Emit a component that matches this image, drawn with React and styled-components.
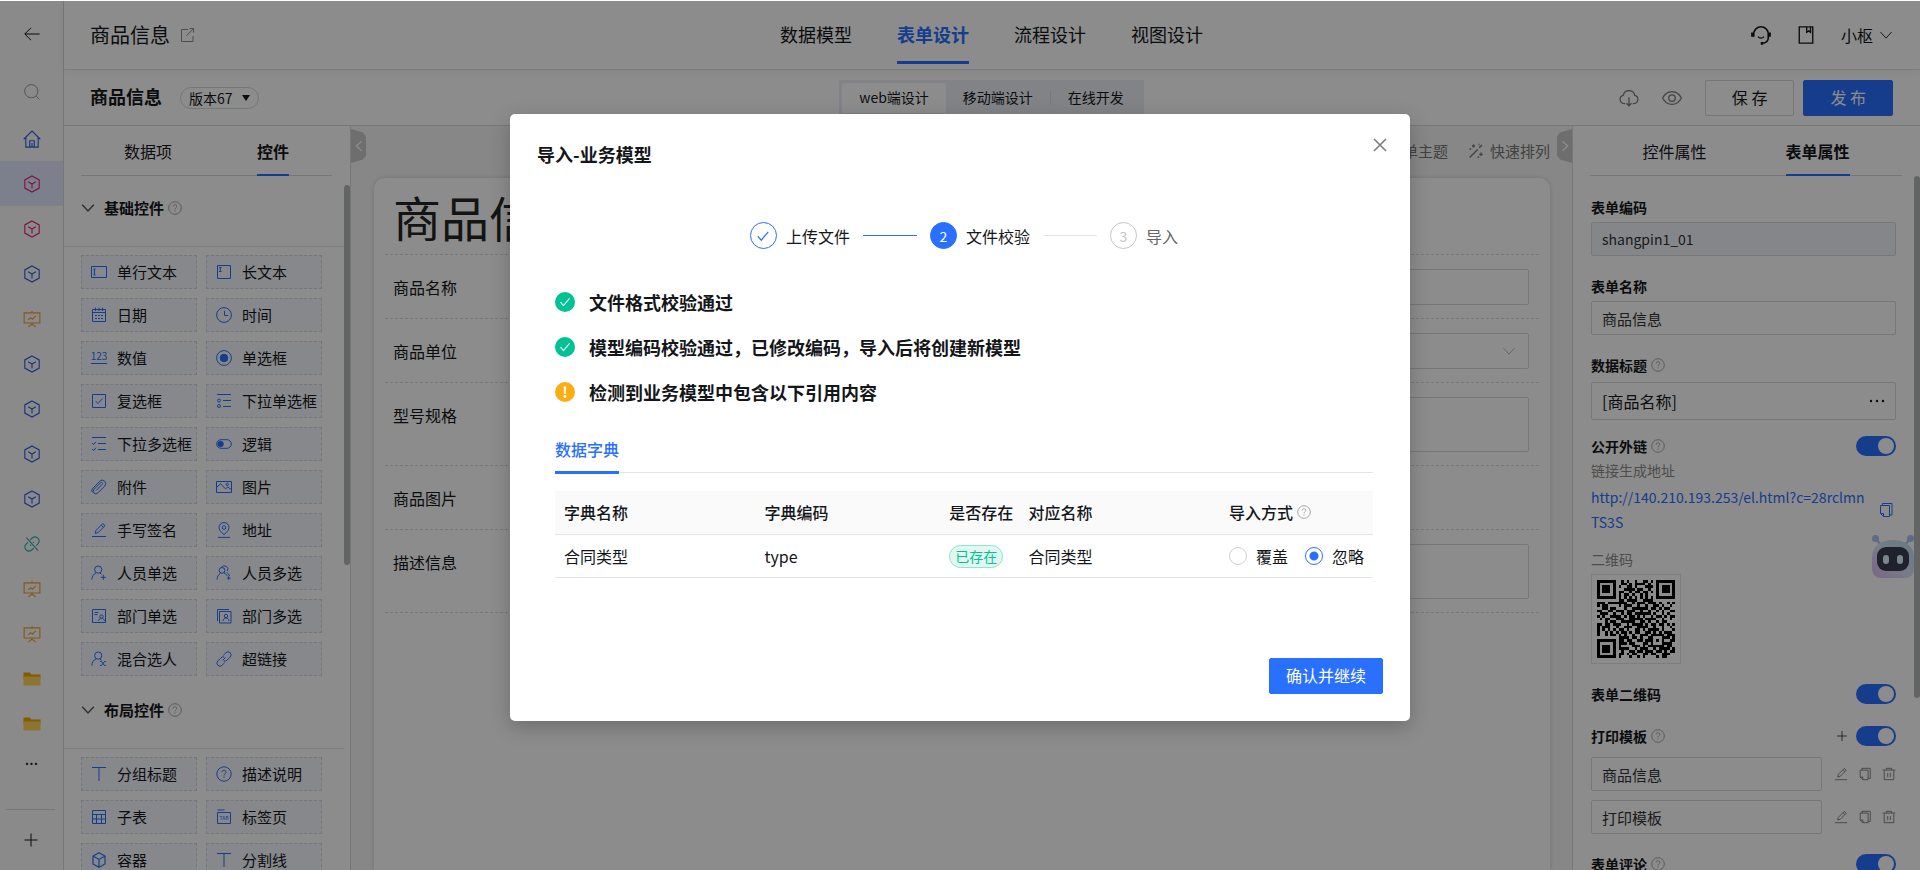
import React from 'react';
import styled, { createGlobalStyle, ThemeProvider } from 'styled-components';

const theme = {
  colorMain: '#2970ff',
  colorText: '#14161a',
  colorMuted: '#8c8c8c',
  colorBorder: '#d9d9d9',
  colorLine: '#e5e5e5',
  colorWhite: '#ffffff',
  colorSuccess: '#00c292',
  colorWarning: '#faad14',
};

const GlobalStyle = createGlobalStyle`
  * {
    box-sizing: border-box;
  }
  body {
    margin: 0;
    background: #ffffff;
    color: #14161a;
    font-family: 'Noto Sans CJK SC', 'Noto Sans', sans-serif;
    font-size: 16px;
    line-height: 24px;
  }
  button, input, select, textarea {
    font: inherit;
    color: inherit;
    margin: 0;
  }
  button {
    padding: 0;
    border: 0;
    background: none;
    cursor: pointer;
  }
  a {
    color: inherit;
    text-decoration: none;
  }
  h1, h2, h3, p {
    margin: 0;
  }
`;

/* icons */

const Svg = styled.svg`
  display: block;
  flex: none;
  width: ${({ $size }) => $size || 16}px;
  height: ${({ $size }) => $size || 16}px;
  overflow: visible;
  fill: none;
  stroke: currentColor;
  stroke-width: 1;
`;

const personShape = (
  <>
    <circle cx="7.2" cy="4.6" r="3.6" />
    <path d="M.8 14.6c.2-3.4 1.8-5.8 4.4-6.6M9 8.2l1.6 1" />
  </>
);

const icons = {
  back: <path d="M15.6 8H.8M7 1.8.8 8 7 14.2" />,
  search: (
    <>
      <circle cx="7.3" cy="7.2" r="6.6" />
      <path d="m12 12 3.4 3.4" />
    </>
  ),
  home: <path d="M.6 8.2 8 .9l7.4 7.3M2.5 6.6v8.6h11V6.6M6 15V9.6h4V15M8 11.5V15" />,
  cube: (
    <>
      <path d="M8 .8 14.4 4.4v7.2L8 15.2 1.6 11.6V4.4z" />
      <path d="M4.6 6 8 8l3.4-2M8 8v4" />
    </>
  ),
  board: (
    <>
      <path d="M1 2.5h14v9H1zM8 .8v1.5M8 11.6v1.2M4.6 15 8 12.6 11.4 15" />
      <path d="m4.6 8.8 2.2-2 1.6 1.4 3-3" />
    </>
  ),
  unlink: (
    <>
      <path d="M6.4 4.2 8.6 2.4a3.6 3.6 0 0 1 5 5L11.8 9.4M4.4 6.6 2.4 8.6a3.6 3.6 0 0 0 5 5L9.6 11.8" />
      <path d="m3 2.4 10.4 11.4M6.2 9.6l1-1M9 7l.8-.8" />
    </>
  ),
  share: <path d="M9 2.5H2.5v12h11.5V9M7.4 8.8 14.2 2M10.6 1.5h4v4" />,
  headset: (
    <>
      <path strokeWidth="1.3" d="M2.2 9.4V7.2a5.8 5.8 0 0 1 11.6 0v3.2c0 2-1.6 3.8-4.4 4.2" />
      <path strokeWidth="2.2" d="M1.2 6v3.4M14.8 6v3.4M7.8 14.6h2" />
      <path d="M5.6 9.2c1.2 1.6 3.6 1.6 4.8 0" />
    </>
  ),
  book: <path strokeWidth="1.2" d="M2 .8h12v14.4H2zM8.6 1v4.6l1.8-1.2 1.6 1.2V1" />,
  down: <path d="m1.6 4.6 6.4 7 6.4-7" />,
  downBold: <path strokeWidth="1.6" d="m1.4 4.4 6.6 7 6.6-7" />,
  left: <path strokeWidth="1.6" d="M11 2.6 5 8l6 5.4" />,
  right: <path strokeWidth="1.6" d="m5 2.6 6 5.4-6 5.4" />,
  cloud: (
    <>
      <path d="M5 12.4H4a3.3 3.3 0 0 1-.6-6.5 4.7 4.7 0 0 1 9.2 0 3.3 3.3 0 0 1-.6 6.5h-1" />
      <path d="M8 7.4v6.8m-2-2 2 2 2-2" />
    </>
  ),
  eye: (
    <>
      <path d="M.5 8C2.3 4.5 4.9 2.9 8 2.9s5.7 1.6 7.5 5.1c-1.8 3.5-4.4 5.1-7.5 5.1S2.3 11.5.5 8z" />
      <circle cx="8" cy="8" r="2.6" />
    </>
  ),
  wand: (
    <>
      <path strokeWidth="1.4" d="m1.6 14.4 8-8M11.2 4.8l2.8-2.8" />
      <path strokeWidth="1.3" d="M5.500 1.500v3M4 3h3M13 9.500v3.600M11.200 11.300h3.600M1.600 6h1.600M9.600 14h1.600M10.500 1.500h1" />
    </>
  ),
  help: (
    <>
      <circle cx="8" cy="8" r="7.2" />
      <path d="M5.9 6.3c0-1.3.9-2 2.1-2s2.1.8 2.1 1.9c0 1.5-2.1 1.6-2.1 3.3M8 10.7V12" />
    </>
  ),
  input: (
    <>
      <path d="M.5 2.5h15v11H.5z" />
      <path d="M2.5 5h2M2.5 11h2M3.5 5v6" />
    </>
  ),
  textarea: (
    <>
      <path d="M1.5 1.5h13v13h-13z" />
      <path d="M3 3.5h2.5M4.3 3.5v4M3 7.5h2.5" />
    </>
  ),
  date: (
    <path d="M1.5 2.5h13v12h-13zM1.5 5.5h13M4.5.6v3.4M8 .6v3.4M11.5.6v3.4M4 8.5h2M7 8.5h2M10 8.5h2M4 11.5h2M7 11.5h2M10 11.5h2" />
  ),
  time: (
    <>
      <circle cx="8" cy="8" r="7.4" />
      <path d="M8.5 3.8v4.7h3.7" />
    </>
  ),
  number: (
    <>
      <text x="8" y="10" fontSize="10" textAnchor="middle" fill="currentColor" stroke="none">
        123
      </text>
      <path d="M0 13.5h16" />
    </>
  ),
  radio: (
    <>
      <circle cx="8" cy="8" r="7.4" />
      <circle cx="8" cy="8" r="3.8" fill="currentColor" />
    </>
  ),
  checkbox: (
    <>
      <path d="M1.5 1.5h13v13h-13z" />
      <path d="m4.5 8 2.5 2.5 4.6-5" />
    </>
  ),
  selectOne: (
    <>
      <path d="M1 1.5h14M7 7.5h8M7 13.5h8" />
      <circle cx="3" cy="7.5" r="1.5" />
      <circle cx="3" cy="13" r="1.5" />
    </>
  ),
  selectMany: (
    <path d="M1 1.5h14M7 7.5h8M7 13.5h8M1.2 7l1.4 1.5L5 5.8M1.2 13l1.4 1.5L5 11.8" />
  ),
  toggle: (
    <>
      <rect x=".7" y="3.7" width="14.6" height="8.6" rx="4.3" />
      <circle cx="4.6" cy="8" r="2.7" fill="currentColor" />
    </>
  ),
  clip: (
    <path d="m5 11.6 6.2-6.3a1.1 1.1 0 0 0-1.6-1.6L3 10.4a2.6 2.6 0 0 0 3.7 3.7l7-7a3.4 3.4 0 0 0-4.9-4.9L2 9.2a3 3 0 0 0-.6 4.2" />
  ),
  image: (
    <>
      <path d="M.5 2.5h15v11H.5z" />
      <path d="m.8 8.2 3.800-3.400 4.800 5 2.400-1.800 3.400 2.400" />
      <circle cx="11.3" cy="5.4" r="1.2" />
    </>
  ),
  edit: <path d="M1 14.5h14M4.2 11.4l.8-3L11.8 1.5l2.2 2.2-6.800 6.900zM10.3 3.1l2.2 2.2" />,
  place: (
    <>
      <path d="M8 12.6C4.6 9.7 3 7.8 3 5.5a5 5 0 0 1 10 0c0 2.300-1.600 4.200-5 7.100zM2 15.4h12" />
      <circle cx="8" cy="5.6" r="1.8" />
    </>
  ),
  person: (
    <>
      {personShape}
      <path d="M12.3 9.8v5M9.8 12.3h5" />
    </>
  ),
  people: (
    <>
      <circle cx="6" cy="5.4" r="2.9" />
      <path d="M1 14.6c.2-2.8 1.3-5 3.3-6.2M5.5 2.4A3.3 3.3 0 1 1 11.3 6M8 8.2c1.8.5 3 1.8 3.4 3M10.5 7.6c1.8.8 2.600 1.800 3 3.400M12.7 11.3v3.6M10.9 13.1h3.6" />
    </>
  ),
  mixed: (
    <>
      {personShape}
      <path d="M9 10.5h1.5l3 4H15M9 14.5h1.5l3-4H15" />
    </>
  ),
  dept: (
    <>
      <path d="M1.5 1.5h13v13h-13zM3.5 4.5h4M3.5 6.5h3" />
      <circle cx="10.5" cy="8.6" r="1.7" />
      <path d="M7.6 13c.2-1.7 1.2-2.7 2.9-2.7s2.7 1 2.9 2.7" />
    </>
  ),
  depts: (
    <>
      <path d="M3.5 3.5H15V15H3.5zM1.5 13V1.5H13" />
      <circle cx="10" cy="8" r="1.7" />
      <path d="M7 13c.2-2 1.3-3 3-3s2.8 1 3 3" />
    </>
  ),
  link: (
    <path d="m7.2 4.4 2.6-2.6a2.9 2.9 0 0 1 4.4 4.2L11 9.2a2.9 2.9 0 0 1-3.3.7M8.8 11.6l-2.6 2.6a2.9 2.9 0 0 1-4.4-4.2L5 6.8a2.9 2.9 0 0 1 3.3-.7M6.6 9.4l2.8-2.8" />
  ),
  title: <path d="M1 1.5h14M8 1.5V15" />,
  table: <path d="M1.5 1.5h13v13h-13zM1.5 5.5h13M1.5 10h13M5.5 5.5v9M10.5 5.5v9" />,
  tab: (
    <>
      <path d="M1.5 3.5h13v11h-13zM1.5 1h7" />
      <text x="8" y="11" fontSize="5" textAnchor="middle" fill="currentColor" stroke="none">
        TAB
      </text>
    </>
  ),
  box: <path strokeWidth="1.2" d="M8 .8 14 4v8l-6 3.2L2 12V4zM2 4l6 3.4L14 4M8 7.4v7.8" />,
  plus: <path d="M8 1.5v13M1.5 8h13" />,
  dots: (
    <g fill="currentColor" stroke="none">
      <circle cx="2" cy="8" r="1.2" />
      <circle cx="8" cy="8" r="1.2" />
      <circle cx="14" cy="8" r="1.2" />
    </g>
  ),
  close: <path strokeWidth="1.7" d="m2 2 12 12M14 2 2 14" />,
  check: <path strokeWidth="1.4" d="m2 8.2 4 4.6 8-9.6" />,
  copy: <path d="M2.5 3.5h9v11h-6l-3-3zM5.5 14.5v-3h-3M4.5 3.500v-2H14V13h-2.500" />,
  trash: <path d="M2.5 4v10.5h11V4M.8 3.5h14.4M5 3.5v-2h6v2M6.5 7v4.5M9.5 7v4.5" />,
};

const Icon = ({ name, size }) => (
  <Svg viewBox="0 0 16 16" $size={size} aria-hidden="true">
    {icons[name]}
  </Svg>
);

const FolderIcon = () => (
  <Svg viewBox="0 0 18 16" $size={18} aria-hidden="true">
    <path d="M.5 1.5h6l2 2h9v5H.5z" fill="#f0a800" stroke="none" />
    <path d="M.5 5.500h17v9H.5z" fill="#ffd45a" stroke="none" />
  </Svg>
);

const qrRows = [
  '11111110010100100110101111111',
  '10000010011010111101001000001',
  '10111010100110100011101011101',
  '10111010001111011001001011101',
  '10111010110010110110101011101',
  '10000010101101001010001000001',
  '11111110101010101010101111111',
  '00000000110111100111100000000',
  '11101111111001011101110100101',
  '10110000101110010010011010010',
  '00110110001001111110110101100',
  '11001101110111001001001010011',
  '01110010010110111111010010100',
  '10100111101011010100101101011',
  '01011001110011111011110010010',
  '00010110011111001101001011000',
  '11011011100101111010110110101',
  '10111001001110011110010010010',
  '10101010110100110101111010001',
  '10010101011010110011010101110',
  '10010110101001001110111110111',
  '00000000111101101001100011101',
  '11111110110110011011101010011',
  '10000010111011000110100011110',
  '10111010100001110101111110110',
  '10111010111100101110010111101',
  '10111010010011011011101101011',
  '10000010110101100110110011100',
  '11111110100010010100001011000',
];

const QrImage = styled.svg`
  display: block;
  width: 78px;
  height: 78px;
  shape-rendering: crispEdges;
`;

const QrCode = () => (
  <QrImage viewBox="0 0 29 29" aria-hidden="true">
    {qrRows.map((row, y) =>
      row.split('').map((bit, x) => (bit === '1' ? <rect key={`${x}-${y}`} x={x} y={y} width="1" height="1" /> : null))
    )}
  </QrImage>
);

/* shell */

const StyledApp = styled.div`
  position: relative;
  display: flex;
  height: 100vh;
  padding-top: 1px;
  overflow: hidden;
`;

const StyledRail = styled.nav`
  display: flex;
  flex-direction: column;
  flex: none;
  width: 64px;
  background: #fbfbfb;
  border-right: 1px solid ${({ theme }) => theme.colorBorder};
`;

const StyledRailButton = styled.button`
  display: flex;
  align-items: center;
  justify-content: center;
  flex: none;
  height: ${({ $height }) => $height || 45}px;
  color: ${({ $color }) => $color || '#14161a'};
  background: ${({ $active }) => ($active ? '#e0eaff' : 'transparent')};
`;

const StyledRailFooter = styled.div`
  display: flex;
  flex-direction: column;
  margin: auto 8px 0 6px;
  border-top: 1px solid ${({ theme }) => theme.colorBorder};
`;

const StyledMain = styled.div`
  display: flex;
  flex-direction: column;
  flex: 1;
  min-width: 0;
`;

const StyledHeader = styled.header`
  position: relative;
  z-index: 1;
  display: grid;
  grid-template-columns: 1fr auto 1fr;
  align-items: center;
  flex: none;
  height: 69px;
  padding: 0 27px 0 26px;
  border-bottom: 1px solid ${({ theme }) => theme.colorLine};
  box-shadow: 0 2px 6px rgba(0, 0, 0, 0.06);
`;

const StyledSubHeader = styled(StyledHeader)`
  z-index: 0;
  height: 56px;
  border-color: ${({ theme }) => theme.colorBorder};
  box-shadow: none;
`;

const StyledGroup = styled.div`
  display: flex;
  align-items: center;
  justify-content: ${({ $end }) => ($end ? 'flex-end' : 'flex-start')};
  gap: ${({ $gap }) => $gap}px;
`;

const StyledAppName = styled.h1`
  font-size: 20px;
  font-weight: 400;
`;

const StyledFormName = styled.h2`
  padding-bottom: 3px;
  font-size: 18px;
  font-weight: 700;
`;

const StyledIconButton = styled.button`
  display: flex;
  align-items: center;
  gap: 6px;
  color: ${({ $color }) => $color || '#14161a'};
`;

const StyledTopNav = styled.nav`
  display: flex;
  align-self: stretch;
  gap: 45px;
`;

const StyledTopLink = styled.a`
  display: flex;
  align-items: center;
  height: 63px;
  padding-top: 5px;
  font-size: 18px;
  font-weight: ${({ $active }) => ($active ? 700 : 400)};
  color: ${({ $active, theme }) => ($active ? theme.colorMain : theme.colorText)};
  border-bottom: 3px solid ${({ $active, theme }) => ($active ? theme.colorMain : 'transparent')};
`;

const StyledVersion = styled.button`
  display: flex;
  align-items: center;
  gap: 9px;
  height: 22px;
  padding: 0 8px;
  font-size: 14px;
  line-height: 18px;
  border: 1px solid ${({ theme }) => theme.colorBorder};
  border-radius: 11px;

  &::after {
    content: '';
    border: 4px solid transparent;
    border-top: 6px solid #14161a;
    border-bottom: 0;
  }
`;

const StyledSegments = styled.div`
  display: flex;
  align-items: center;
  height: 36px;
  padding: 3px;
  background: #eceff5;
  border-radius: 2px;
`;

const StyledSegment = styled.button`
  height: 30px;
  padding: 0 17px 2px;
  font-size: 14px;
  border-radius: 2px;
  background: ${({ $active }) => ($active ? '#ffffff' : 'transparent')};
`;

const StyledSegmentLine = styled.span`
  width: 1px;
  height: 14px;
  background: ${({ theme }) => theme.colorBorder};
`;

const StyledButton = styled.button`
  height: 36px;
  padding: 0 ${({ $padding }) => $padding || 26}px 2px;
  border: 1px solid ${({ $primary, theme }) => ($primary ? theme.colorMain : theme.colorBorder)};
  border-radius: 2px;
  background: ${({ $primary, theme }) => ($primary ? theme.colorMain : theme.colorWhite)};
  color: ${({ $primary, theme }) => ($primary ? theme.colorWhite : theme.colorText)};
`;

const StyledWorkspace = styled.div`
  display: flex;
  flex: 1;
  min-height: 0;
`;

const StyledSide = styled.aside`
  display: flex;
  flex-direction: column;
  flex: none;
  width: ${({ $width }) => $width}px;
  border: 0 solid ${({ theme }) => theme.colorBorder};
  border-${({ $edge }) => $edge}-width: 1px;
`;

const StyledTabs = styled.div`
  display: flex;
  justify-content: center;
  flex: none;
  gap: ${({ $gap }) => $gap}px;
  height: 50px;
  margin: 0 18px 0 17px;
  border-bottom: 1px solid ${({ theme }) => theme.colorBorder};
`;

const StyledTab = styled.button`
  height: 50px;
  padding-top: 2px;
  font-weight: ${({ $active }) => ($active ? 700 : 400)};
  border-bottom: 2px solid ${({ $active, theme }) => ($active ? theme.colorMain : 'transparent')};
`;

const StyledScrollArea = styled.div`
  display: flex;
  justify-content: space-between;
  flex: 1;
  min-height: 0;
  overflow: hidden;
`;

const StyledScrollThumb = styled.span`
  flex: none;
  width: 6px;
  height: ${({ $height }) => $height}px;
  margin-top: ${({ $top }) => $top || 0}px;
  background: #b4b9b8;
  border-radius: 3px;
`;

/* control palette */

const StyledPalette = styled.div`
  flex: 1;
`;

const StyledPaletteHeader = styled.h3`
  display: flex;
  align-items: center;
  gap: 9px;
  height: 71px;
  padding: 0 17px 6px;
  font-size: 15px;
  font-weight: 700;
  border-bottom: 1px solid ${({ theme }) => theme.colorLine};

  > svg {
    color: #555555;
  }
`;

const StyledHelp = styled.span`
  display: flex;
  align-items: center;
  gap: 4px;

  svg {
    color: #999999;
  }
`;

const StyledPaletteGrid = styled.div`
  display: grid;
  grid-template-columns: 1fr 1fr;
  gap: 9px;
  padding: 8px 22px 2px 17px;
`;

const StyledPaletteItem = styled.button`
  display: flex;
  align-items: center;
  gap: 10px;
  height: 34px;
  padding-left: 9px;
  font-size: 15px;
  white-space: nowrap;
  background: #f5f8ff;
  border: 1px dashed #d4d8e0;

  svg {
    color: ${({ theme }) => theme.colorMain};
  }
`;

/* canvas */

const StyledCanvas = styled.main`
  position: relative;
  display: flex;
  flex-direction: column;
  flex: 1;
  min-width: 0;
  padding: 0 22px 0 23px;
  background: #f6f6f6;
`;

const StyledCollapse = styled.button`
  position: absolute;
  top: 3px;
  ${({ $side }) => $side}: 0;
  display: flex;
  align-items: center;
  justify-content: center;
  width: 15px;
  height: 34px;
  color: #ffffff;
  background: #c9c9c9;
  clip-path: ${({ $side }) =>
    $side === 'left'
      ? 'polygon(0 0, 80% 10%, 100% 22%, 100% 78%, 80% 90%, 0 100%)'
      : 'polygon(100% 0, 20% 10%, 0 22%, 0 78%, 20% 90%, 100% 100%)'};
`;

const StyledCanvasTools = styled.div`
  display: flex;
  align-items: center;
  justify-content: flex-end;
  gap: 20px;
  flex: none;
  height: 52px;
  padding-bottom: 2px;
  font-size: 15px;
`;

const StyledCard = styled.form`
  flex: 1;
  padding: 0 11px;
  background: #ffffff;
  border-radius: 11px 11px 0 0;
  box-shadow: 0 0 4px rgba(0, 0, 0, 0.16);
`;

const StyledCardTitle = styled.h2`
  padding: 8px;
  font-size: 48px;
  font-weight: 400;
  line-height: 60px;
  color: #262626;
  border-bottom: 1px dashed ${({ theme }) => theme.colorBorder};
`;

const StyledCardRow = styled.div`
  display: flex;
  align-items: flex-start;
  min-height: 64px;
  padding: 14px 10px 13px 8px;
  border-bottom: 1px dashed ${({ theme }) => theme.colorBorder};

  > label,
  > span {
    width: 150px;
    line-height: 36px;
  }
`;

const StyledField = styled.input`
  display: block;
  flex: 1;
  width: 100%;
  min-width: 0;
  height: ${({ $height }) => $height || 36}px;
  padding: 0 10px;
  border: 1px solid ${({ theme }) => theme.colorBorder};
  border-radius: 2px;
  background: ${({ disabled }) => (disabled ? '#f2f5fa' : '#ffffff')};
  color: #303236;
  font-size: ${({ $fontSize }) => $fontSize || 15}px;
  resize: none;
  outline: none;
  appearance: none;
`;

const StyledSelectWrapper = styled.div`
  display: grid;
  flex: 1;
  align-items: center;

  > * {
    grid-area: 1 / 1;
  }
  svg {
    justify-self: end;
    margin-right: 13px;
    color: #b0b0b0;
  }
`;

/* form properties */

const StyledProps = styled.div`
  flex: 1;
  padding: 19px 18px 0 18px;
  font-size: 14px;
`;

const StyledPropRow = styled.div`
  display: flex;
  align-items: center;
  justify-content: space-between;
  height: 24px;
  margin-top: ${({ $top }) => $top || 0}px;
`;

const StyledPropLabel = styled.label`
  display: flex;
  align-items: center;
  gap: 4px;
  font-weight: 700;

  svg {
    color: #999999;
  }
`;

const StyledPropBlock = styled.div`
  display: grid;
  gap: 3px;
  margin-bottom: ${({ $bottom }) => $bottom || 18}px;
`;

const StyledPicker = styled.div`
  display: flex;
  align-items: center;
  justify-content: space-between;
  height: 38px;
  margin-top: 2px;
  padding: 0 10px;
  font-size: 16px;
  border: 1px solid ${({ theme }) => theme.colorBorder};
  border-radius: 2px;
`;

const StyledSwitch = styled.input`
  appearance: none;
  position: relative;
  flex: none;
  width: 40px;
  height: 20px;
  background: ${({ theme }) => theme.colorMain};
  border-radius: 10px;

  &::before {
    content: '';
    position: absolute;
    top: 2px;
    right: 2px;
    width: 16px;
    height: 16px;
    background: #ffffff;
    border-radius: 50%;
  }
`;

const StyledHint = styled.p`
  color: ${({ theme }) => theme.colorMuted};
`;

const StyledUrlRow = styled.div`
  display: flex;
  align-items: center;
  justify-content: space-between;
  gap: 10px;
  margin: 3px 0 12px;
  padding-right: 2px;
  line-height: 25px;
  color: ${({ theme }) => theme.colorMain};
`;

const StyledUrl = styled.a`
  width: 275px;
  word-break: break-all;
`;

const StyledQrFrame = styled.div`
  width: 90px;
  margin-top: 3px;
  padding: 5px;
  border: 1px solid ${({ theme }) => theme.colorLine};
`;

const StyledTemplate = styled.div`
  display: flex;
  align-items: center;
  gap: 12px;
  margin-top: 9px;
`;

const StyledTemplateActions = styled.div`
  display: flex;
  gap: 10px;
`;

const StyledAssistant = styled.button`
  position: absolute;
  right: 5px;
  top: 534px;
  width: 44px;
  height: 46px;
`;

/* import dialog */

const StyledOverlay = styled.div`
  position: absolute;
  inset: 1px 0 0;
  z-index: 10;
  display: flex;
  align-items: flex-start;
  justify-content: center;
  padding-top: 113px;
  background: rgba(0, 0, 0, 0.45);
`;

const StyledDialog = styled.section`
  width: 900px;
  max-width: 100%;
  padding: 27px;
  background: ${({ theme }) => theme.colorWhite};
  border-radius: 5px;
  box-shadow: 0 6px 20px rgba(0, 0, 0, 0.22);
`;

const StyledDialogHeader = styled.div`
  display: flex;
  align-items: flex-start;
  justify-content: space-between;

  h2 {
    font-size: 18px;
    line-height: 26px;
  }
  button {
    margin: -4px -5px 0 0;
    color: #808080;
  }
`;

const StyledSteps = styled.ol`
  display: flex;
  align-items: center;
  justify-content: center;
  gap: 13px;
  margin: 55px 0 0;
  padding: 0 0 0 8px;
  list-style: none;
`;

const StyledStep = styled.li`
  display: flex;
  align-items: center;
  gap: 9px;
  color: ${({ $pending }) => ($pending ? '#666666' : '#14161a')};
`;

const StyledStepMark = styled.span`
  display: flex;
  align-items: center;
  justify-content: center;
  width: 27px;
  height: 27px;
  font-size: 14px;
  line-height: 24px;
  border: 1px solid ${({ $pending, theme }) => ($pending ? '#c4c4c4' : theme.colorMain)};
  border-radius: 50%;
  background: ${({ $active, theme }) => ($active ? theme.colorMain : theme.colorWhite)};
  color: ${({ $active, $pending, theme }) => ($active ? theme.colorWhite : $pending ? '#c4c4c4' : theme.colorMain)};
`;

const StyledStepLine = styled.li`
  width: 54px;
  height: 1px;
  background: ${({ $done, theme }) => ($done ? theme.colorMain : theme.colorLine)};
`;

const StyledDialogBody = styled.div`
  padding: 30px 10px 0 18px;
`;

const StyledResult = styled.p`
  display: flex;
  align-items: center;
  gap: 14px;
  height: 45px;
  font-size: 18px;
  font-weight: 700;
`;

const StyledResultMark = styled.span`
  display: flex;
  align-items: center;
  justify-content: center;
  width: 20px;
  height: 20px;
  font-size: 15px;
  line-height: 20px;
  border-radius: 50%;
  color: ${({ theme }) => theme.colorWhite};
  background: ${({ $warning, theme }) => ($warning ? theme.colorWarning : theme.colorSuccess)};
`;

const StyledDictTabs = styled.div`
  height: 38px;
  margin: 21px 0 18px;
  border-bottom: 1px solid ${({ theme }) => theme.colorLine};

  button {
    height: 39px;
    padding-bottom: 9px;
    font-weight: 500;
    color: ${({ theme }) => theme.colorMain};
    border-bottom: 3px solid ${({ theme }) => theme.colorMain};
  }
`;

const StyledTable = styled.table`
  width: 100%;
  table-layout: fixed;
  border-collapse: collapse;
  text-align: left;
  white-space: nowrap;

  th,
  td {
    height: 43px;
    padding: 0 0 0 9px;
    border-bottom: 1px solid ${({ theme }) => theme.colorLine};
  }
  th {
    font-weight: 500;
    background: #fafafa;
  }
`;

const StyledCol = styled.col`
  width: ${({ $width }) => $width};
`;

const StyledTag = styled.span`
  display: inline-block;
  padding: 0 5px;
  font-size: 14px;
  line-height: 21px;
  color: ${({ theme }) => theme.colorSuccess};
  background: #e0f8f1;
  border: 1px solid #8ce5cd;
  border-radius: 12px;
`;

const StyledRadios = styled.div`
  display: flex;
  gap: 17px;

  label {
    display: flex;
    align-items: center;
    gap: 9px;
  }
`;

const StyledRadio = styled.input`
  appearance: none;
  width: 18px;
  height: 18px;
  border: 1px solid #d0d0d0;
  border-radius: 50%;

  &:checked {
    border-color: ${({ theme }) => theme.colorMain};
    background: radial-gradient(${({ theme }) => theme.colorMain} 4px, transparent 5px);
  }
`;

const StyledDialogFooter = styled.div`
  display: flex;
  justify-content: flex-end;
  margin-top: 80px;
`;

const railItems = [
  { icon: 'home', color: '#2f5fe0', label: '首页' },
  { icon: 'cube', color: '#e8237c', label: '商品信息', active: true },
  { icon: 'cube', color: '#e8237c', label: '模型' },
  { icon: 'cube', color: '#2f5fe0', label: '模型' },
  { icon: 'board', color: '#f0a030', label: '看板' },
  { icon: 'cube', color: '#2f5fe0', label: '模型' },
  { icon: 'cube', color: '#2f5fe0', label: '模型' },
  { icon: 'cube', color: '#2f5fe0', label: '模型' },
  { icon: 'cube', color: '#2f5fe0', label: '模型' },
  { icon: 'unlink', color: '#2fb0a0', label: '链接' },
  { icon: 'board', color: '#f0a030', label: '看板' },
  { icon: 'board', color: '#f0a030', label: '看板' },
  { icon: 'folder', label: '文件夹' },
  { icon: 'folder', label: '文件夹' },
];

const paletteGroups = [
  {
    title: '基础控件',
    items: [
      ['input', '单行文本'],
      ['textarea', '长文本'],
      ['date', '日期'],
      ['time', '时间'],
      ['number', '数值'],
      ['radio', '单选框'],
      ['checkbox', '复选框'],
      ['selectOne', '下拉单选框'],
      ['selectMany', '下拉多选框'],
      ['toggle', '逻辑'],
      ['clip', '附件'],
      ['image', '图片'],
      ['edit', '手写签名'],
      ['place', '地址'],
      ['person', '人员单选'],
      ['people', '人员多选'],
      ['dept', '部门单选'],
      ['depts', '部门多选'],
      ['mixed', '混合选人'],
      ['link', '超链接'],
    ],
  },
  {
    title: '布局控件',
    items: [
      ['title', '分组标题'],
      ['help', '描述说明'],
      ['table', '子表'],
      ['tab', '标签页'],
      ['box', '容器'],
      ['title', '分割线'],
    ],
  },
];

const Rail = () => (
  <StyledRail>
    <StyledRailButton $height={66} aria-label="返回">
      <Icon name="back" />
    </StyledRailButton>
    <StyledRailButton $height={49} $color="#999999" aria-label="搜索">
      <Icon name="search" />
    </StyledRailButton>
    {railItems.map(({ icon, color, label, active }, index) => (
      <StyledRailButton key={index} $color={color} $active={active} aria-label={label}>
        {icon === 'folder' ? <FolderIcon /> : <Icon name={icon} size={18} />}
      </StyledRailButton>
    ))}
    <StyledRailButton $height={24}>...</StyledRailButton>
    <StyledRailFooter>
      <StyledRailButton $height={60} aria-label="新建">
        <Icon name="plus" />
      </StyledRailButton>
    </StyledRailFooter>
  </StyledRail>
);

const Header = () => (
  <StyledHeader>
    <StyledGroup $gap={9}>
      <StyledAppName>商品信息</StyledAppName>
      <StyledIconButton $color="#8c8c8c" aria-label="打开">
        <Icon name="share" />
      </StyledIconButton>
    </StyledGroup>
    <StyledTopNav>
      <StyledTopLink href="#data">数据模型</StyledTopLink>
      <StyledTopLink href="#form" $active>
        表单设计
      </StyledTopLink>
      <StyledTopLink href="#flow">流程设计</StyledTopLink>
      <StyledTopLink href="#view">视图设计</StyledTopLink>
    </StyledTopNav>
    <StyledGroup $end $gap={26}>
      <StyledIconButton aria-label="客服">
        <Icon name="headset" size={20} />
      </StyledIconButton>
      <StyledIconButton aria-label="文档">
        <Icon name="book" size={18} />
      </StyledIconButton>
      <StyledIconButton>
        小枢
        <Icon name="down" size={14} />
      </StyledIconButton>
    </StyledGroup>
  </StyledHeader>
);

const SubHeader = () => (
  <StyledSubHeader as="div">
    <StyledGroup $gap={18}>
      <StyledFormName>商品信息</StyledFormName>
      <StyledVersion>版本67</StyledVersion>
    </StyledGroup>
    <StyledSegments>
      <StyledSegment $active>web端设计</StyledSegment>
      <StyledSegment>移动端设计</StyledSegment>
      <StyledSegmentLine />
      <StyledSegment>在线开发</StyledSegment>
    </StyledSegments>
    <StyledGroup $end $gap={23}>
      <StyledIconButton $color="#777777" aria-label="下载">
        <Icon name="cloud" size={20} />
      </StyledIconButton>
      <StyledIconButton $color="#777777" aria-label="预览">
        <Icon name="eye" size={20} />
      </StyledIconButton>
      <StyledGroup $gap={9}>
        <StyledButton>保 存</StyledButton>
        <StyledButton $primary>发 布</StyledButton>
      </StyledGroup>
    </StyledGroup>
  </StyledSubHeader>
);

const ControlPanel = () => (
  <StyledSide $width={287} $edge="right">
    <StyledTabs $gap={85}>
      <StyledTab>数据项</StyledTab>
      <StyledTab $active>控件</StyledTab>
    </StyledTabs>
    <StyledScrollArea>
      <StyledPalette>
        {paletteGroups.map(({ title, items }) => (
          <section key={title}>
            <StyledPaletteHeader>
              <Icon name="downBold" size={14} />
              <StyledHelp>
                {title}
                <Icon name="help" size={14} />
              </StyledHelp>
            </StyledPaletteHeader>
            <StyledPaletteGrid>
              {items.map(([icon, name]) => (
                <StyledPaletteItem key={name}>
                  <Icon name={icon} />
                  {name}
                </StyledPaletteItem>
              ))}
            </StyledPaletteGrid>
          </section>
        ))}
      </StyledPalette>
      <StyledScrollThumb $height={380} $top={9} />
    </StyledScrollArea>
  </StyledSide>
);

const Canvas = () => (
  <StyledCanvas>
    <StyledCollapse $side="left" aria-label="收起控件">
      <Icon name="left" size={14} />
    </StyledCollapse>
    <StyledCollapse $side="right" aria-label="收起属性">
      <Icon name="right" size={14} />
    </StyledCollapse>
    <StyledCanvasTools>
      <StyledIconButton $color="#777777">表单主题</StyledIconButton>
      <StyledIconButton $color="#777777">
        <Icon name="wand" />
        快速排列
      </StyledIconButton>
    </StyledCanvasTools>
    <StyledCard>
      <StyledCardTitle>商品信息</StyledCardTitle>
      <StyledCardRow>
        <label htmlFor="goods-name">商品名称</label>
        <StyledField id="goods-name" />
      </StyledCardRow>
      <StyledCardRow>
        <label htmlFor="goods-unit">商品单位</label>
        <StyledSelectWrapper>
          <StyledField as="select" id="goods-unit" />
          <Icon name="down" size={14} />
        </StyledSelectWrapper>
      </StyledCardRow>
      <StyledCardRow>
        <label htmlFor="goods-spec">型号规格</label>
        <StyledField as="textarea" id="goods-spec" $height={55} />
      </StyledCardRow>
      <StyledCardRow>
        <span>商品图片</span>
      </StyledCardRow>
      <StyledCardRow>
        <label htmlFor="goods-desc">描述信息</label>
        <StyledField as="textarea" id="goods-desc" $height={55} />
      </StyledCardRow>
    </StyledCard>
  </StyledCanvas>
);

const Template = ({ name }) => (
  <StyledTemplate>
    <StyledField $height={34} defaultValue={name} aria-label={name} />
    <StyledTemplateActions>
      <StyledIconButton $color="#777777" aria-label="编辑">
        <Icon name="edit" size={14} />
      </StyledIconButton>
      <StyledIconButton $color="#777777" aria-label="复制">
        <Icon name="copy" size={14} />
      </StyledIconButton>
      <StyledIconButton $color="#777777" aria-label="删除">
        <Icon name="trash" size={14} />
      </StyledIconButton>
    </StyledTemplateActions>
  </StyledTemplate>
);

const FormProperties = () => (
  <StyledSide $width={348} $edge="left">
    <StyledTabs $gap={79}>
      <StyledTab>控件属性</StyledTab>
      <StyledTab $active>表单属性</StyledTab>
    </StyledTabs>
    <StyledScrollArea>
      <StyledProps>
        <StyledPropBlock>
          <StyledPropLabel htmlFor="form-code">表单编码</StyledPropLabel>
          <StyledField id="form-code" $height={34} $fontSize={14} defaultValue="shangpin1_01" disabled />
        </StyledPropBlock>
        <StyledPropBlock>
          <StyledPropLabel htmlFor="form-name">表单名称</StyledPropLabel>
          <StyledField id="form-name" $height={34} defaultValue="商品信息" />
        </StyledPropBlock>
        <StyledPropBlock $bottom={14}>
          <StyledPropLabel as="span">
            数据标题
            <Icon name="help" size={14} />
          </StyledPropLabel>
          <StyledPicker>
            [商品名称]
            <StyledIconButton aria-label="选择数据标题">
              <Icon name="dots" />
            </StyledIconButton>
          </StyledPicker>
        </StyledPropBlock>
        <StyledPropRow>
          <StyledPropLabel htmlFor="public-link">
            公开外链
            <Icon name="help" size={14} />
          </StyledPropLabel>
          <StyledSwitch type="checkbox" id="public-link" defaultChecked />
        </StyledPropRow>
        <StyledHint>链接生成地址</StyledHint>
        <StyledUrlRow>
          <StyledUrl href="#link">http://140.210.193.253/el.html?c=28rclmnTS3S</StyledUrl>
          <Icon name="copy" />
        </StyledUrlRow>
        <StyledHint>二维码</StyledHint>
        <StyledQrFrame>
          <QrCode />
        </StyledQrFrame>
        <StyledPropRow $top={18}>
          <StyledPropLabel htmlFor="form-qr">表单二维码</StyledPropLabel>
          <StyledSwitch type="checkbox" id="form-qr" defaultChecked />
        </StyledPropRow>
        <StyledPropRow $top={18}>
          <StyledPropLabel htmlFor="print-template">
            打印模板
            <Icon name="help" size={14} />
          </StyledPropLabel>
          <StyledGroup $gap={8}>
            <StyledIconButton aria-label="添加模板">
              <Icon name="plus" size={12} />
            </StyledIconButton>
            <StyledSwitch type="checkbox" id="print-template" defaultChecked />
          </StyledGroup>
        </StyledPropRow>
        <Template name="商品信息" />
        <Template name="打印模板" />
        <StyledPropRow $top={18}>
          <StyledPropLabel htmlFor="form-comment">
            表单评论
            <Icon name="help" size={14} />
          </StyledPropLabel>
          <StyledSwitch type="checkbox" id="form-comment" defaultChecked />
        </StyledPropRow>
      </StyledProps>
      <StyledScrollThumb $height={522} />
    </StyledScrollArea>
  </StyledSide>
);

const Assistant = () => (
  <StyledAssistant aria-label="智能助手">
    <svg width="44" height="46" viewBox="0 0 44 46" aria-hidden="true">
      <defs>
        <linearGradient id="shell" x1="0" y1="1" x2="1" y2="0">
          <stop offset="0" stopColor="#e2b8f0" />
          <stop offset=".5" stopColor="#d8e4fb" />
          <stop offset="1" stopColor="#b8dcf4" />
        </linearGradient>
      </defs>
      <path d="m5 5 5 6M39 5l-5 6" stroke="#a9bfe6" strokeWidth="2" />
      <circle cx="4.5" cy="4.5" r="3.5" fill="#a9c4ee" />
      <circle cx="39.5" cy="4.5" r="3.5" fill="#a9c4ee" />
      <path d="M1 24C1 12 10 6 22 6s21 6 21 18v10c0 7-4 10-10 10H11C5 44 1 41 1 34z" fill="url(#shell)" />
      <rect x="6" y="13" width="32" height="24" rx="9" fill="#3a3d52" />
      <rect x="12" y="21" width="6" height="9" rx="3" fill="#dff2ff" />
      <rect x="26" y="21" width="6" height="9" rx="3" fill="#dff2ff" />
    </svg>
  </StyledAssistant>
);

const ImportDialog = () => (
  <StyledOverlay>
    <StyledDialog role="dialog" aria-labelledby="import-title">
      <StyledDialogHeader>
        <h2 id="import-title">导入-业务模型</h2>
        <button aria-label="关闭">
          <Icon name="close" />
        </button>
      </StyledDialogHeader>
      <StyledSteps>
        <StyledStep>
          <StyledStepMark>
            <Icon name="check" size={14} />
          </StyledStepMark>
          上传文件
        </StyledStep>
        <StyledStepLine $done />
        <StyledStep>
          <StyledStepMark $active>2</StyledStepMark>
          文件校验
        </StyledStep>
        <StyledStepLine />
        <StyledStep $pending>
          <StyledStepMark $pending>3</StyledStepMark>
          导入
        </StyledStep>
      </StyledSteps>
      <StyledDialogBody>
        <StyledResult>
          <StyledResultMark>
            <Icon name="check" size={12} />
          </StyledResultMark>
          文件格式校验通过
        </StyledResult>
        <StyledResult>
          <StyledResultMark>
            <Icon name="check" size={12} />
          </StyledResultMark>
          模型编码校验通过，已修改编码，导入后将创建新模型
        </StyledResult>
        <StyledResult>
          <StyledResultMark $warning>!</StyledResultMark>
          检测到业务模型中包含以下引用内容
        </StyledResult>
        <StyledDictTabs>
          <button>数据字典</button>
        </StyledDictTabs>
        <StyledTable>
          <colgroup>
            <StyledCol $width="24.5%" />
            <StyledCol $width="22.6%" />
            <StyledCol $width="9.7%" />
            <StyledCol $width="24.5%" />
            <StyledCol />
          </colgroup>
          <thead>
            <tr>
              <th>字典名称</th>
              <th>字典编码</th>
              <th>是否存在</th>
              <th>对应名称</th>
              <th>
                <StyledHelp>
                  导入方式
                  <Icon name="help" size={14} />
                </StyledHelp>
              </th>
            </tr>
          </thead>
          <tbody>
            <tr>
              <td>合同类型</td>
              <td>type</td>
              <td>
                <StyledTag>已存在</StyledTag>
              </td>
              <td>合同类型</td>
              <td>
                <StyledRadios>
                  <label>
                    <StyledRadio type="radio" name="mode" />
                    覆盖
                  </label>
                  <label>
                    <StyledRadio type="radio" name="mode" defaultChecked />
                    忽略
                  </label>
                </StyledRadios>
              </td>
            </tr>
          </tbody>
        </StyledTable>
      </StyledDialogBody>
      <StyledDialogFooter>
        <StyledButton $primary $padding={16}>
          确认并继续
        </StyledButton>
      </StyledDialogFooter>
    </StyledDialog>
  </StyledOverlay>
);

const App = () => (
  <ThemeProvider theme={theme}>
    <GlobalStyle />
    <StyledApp>
      <Rail />
      <StyledMain>
        <Header />
        <SubHeader />
        <StyledWorkspace>
          <ControlPanel />
          <Canvas />
          <FormProperties />
        </StyledWorkspace>
      </StyledMain>
      <Assistant />
      <ImportDialog />
    </StyledApp>
  </ThemeProvider>
);

export default App;
